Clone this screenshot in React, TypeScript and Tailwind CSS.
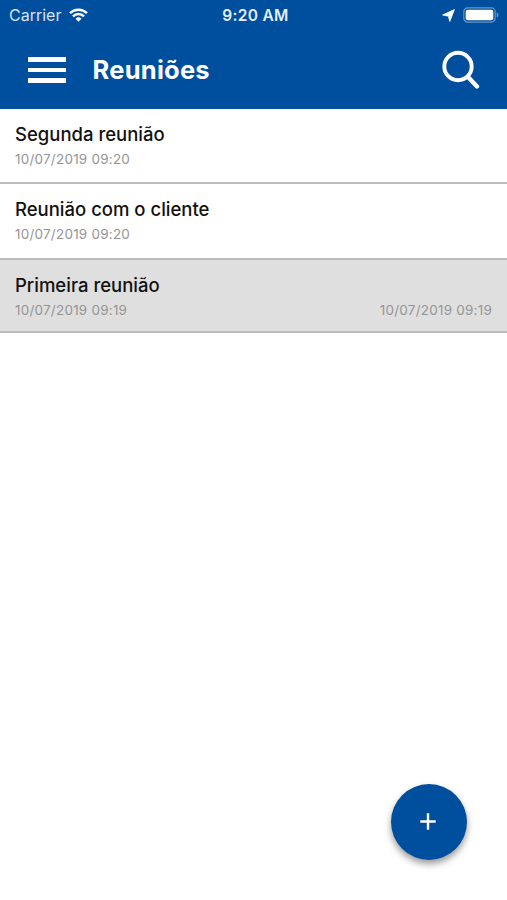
type Meeting = {
  title: string;
  start: string;
  end?: string;
};

const meetings: Meeting[] = [
  { title: 'Segunda reunião', start: '10/07/2019 09:20' },
  { title: 'Reunião com o cliente', start: '10/07/2019 09:20' },
  { title: 'Primeira reunião', start: '10/07/2019 09:19', end: '10/07/2019 09:19' },
];

const StatusBar = () => (
  <div className="grid h-[30px] grid-cols-3 items-center pl-[9px] pr-[8px] text-[16px] leading-[30px]">
    <div className="flex items-center gap-[8px]">
      <span className="text-[#d6e4f4]">Carrier</span>
      <svg width="19" height="14" viewBox="0 0 19 14" fill="none" stroke="white" strokeWidth="2.5">
        <path d="M1 5.1a12.2 12.2 0 0 1 17 0" />
        <path d="M4 8.3a7.8 7.8 0 0 1 11 0" />
        <path d="M9.5 13.8 6.5 10.8a4.3 4.3 0 0 1 6 0z" fill="white" stroke="none" />
      </svg>
    </div>
    <span className="pl-[3px] pt-[2px] text-center text-[15.5px] font-semibold leading-[28px] tracking-[0.3px] text-[#e4eefa]">
      9:20 AM
    </span>
    <div className="flex items-center justify-end gap-[7.5px]">
      <svg width="13" height="13" viewBox="0 0 13 13" fill="white" stroke="white" strokeWidth="0.8" strokeLinejoin="round">
        <path d="M12.4.6 7.8 12.4 6.4 7.2.6 6z" />
      </svg>
      <svg width="36" height="16" viewBox="0 0 36 16">
        <rect x="0.8" y="0.8" width="31.4" height="14.4" rx="4" fill="none" stroke="#6795c5" strokeWidth="1.2" />
        <rect x="2.7" y="2.7" width="27.6" height="10.6" rx="2" fill="white" />
        <path d="M33.7 5.4q1.8.8 1.8 2.6t-1.8 2.6z" fill="#6795c5" />
      </svg>
    </div>
  </div>
);

const Header = () => (
  <header className="h-[108.5px] bg-[#004f9f] text-white">
    <StatusBar />
    <div className="flex h-[79px] items-center pl-[28px] pr-[27px]">
      <button aria-label="Menu" className="mt-[1px] flex w-[38px] flex-col gap-[6px]">
        <span className="h-[4.4px] bg-white" />
        <span className="h-[4.4px] bg-white" />
        <span className="h-[4.4px] bg-white" />
      </button>
      <h1 className="ml-[26.5px] mt-[2px] text-[25.5px] font-bold tracking-[0.25px]">Reuniões</h1>
      <button aria-label="Buscar" className="ml-auto">
        <svg width="38" height="40" viewBox="0 0 38 40" fill="none" stroke="white" strokeLinecap="round">
          <circle cx="16" cy="16.5" r="13.7" strokeWidth="3.9" />
          <path d="M26.3 27.2 35 36.5" strokeWidth="4.4" />
        </svg>
      </button>
    </div>
  </header>
);

const MeetingRow = ({ title, start, end }: Meeting) => (
  <li
    className={
      end
        ? 'h-[73px] border-b-2 border-[#bcbcbc] bg-[#dfdfdf] px-[15px] pt-[12px]'
        : 'h-[75.5px] border-b-2 border-[#bcbcbc] px-[15px] pt-[12px]'
    }
  >
    <p className="text-[18.5px] font-medium leading-[26px] text-[#111]">{title}</p>
    <div className="flex justify-between text-[13.5px] leading-[25px] tracking-[0.22px] text-[#959595]">
      <span>{start}</span>
      {end && <span>{end}</span>}
    </div>
  </li>
);

const App = () => {
  return (
    <div className="relative h-[900px] w-[507px] overflow-hidden bg-white font-['Inter','Liberation_Sans',sans-serif]">
      <Header />
      <ul>
        {meetings.map((meeting) => (
          <MeetingRow key={meeting.title} {...meeting} />
        ))}
      </ul>
      <button
        aria-label="Adicionar"
        className="absolute bottom-[40.5px] right-[40.5px] flex size-[76px] items-center justify-center rounded-full bg-[#004f9f] shadow-[0_4px_7px_rgba(0,0,0,0.4)]"
      >
        <svg width="16" height="17" viewBox="0 0 16 17" stroke="white" strokeWidth="2.4" className="mr-[2px]">
          <path d="M8 .3v16.4M.3 8.5h15.4" />
        </svg>
      </button>
    </div>
  );
};

export default App;
